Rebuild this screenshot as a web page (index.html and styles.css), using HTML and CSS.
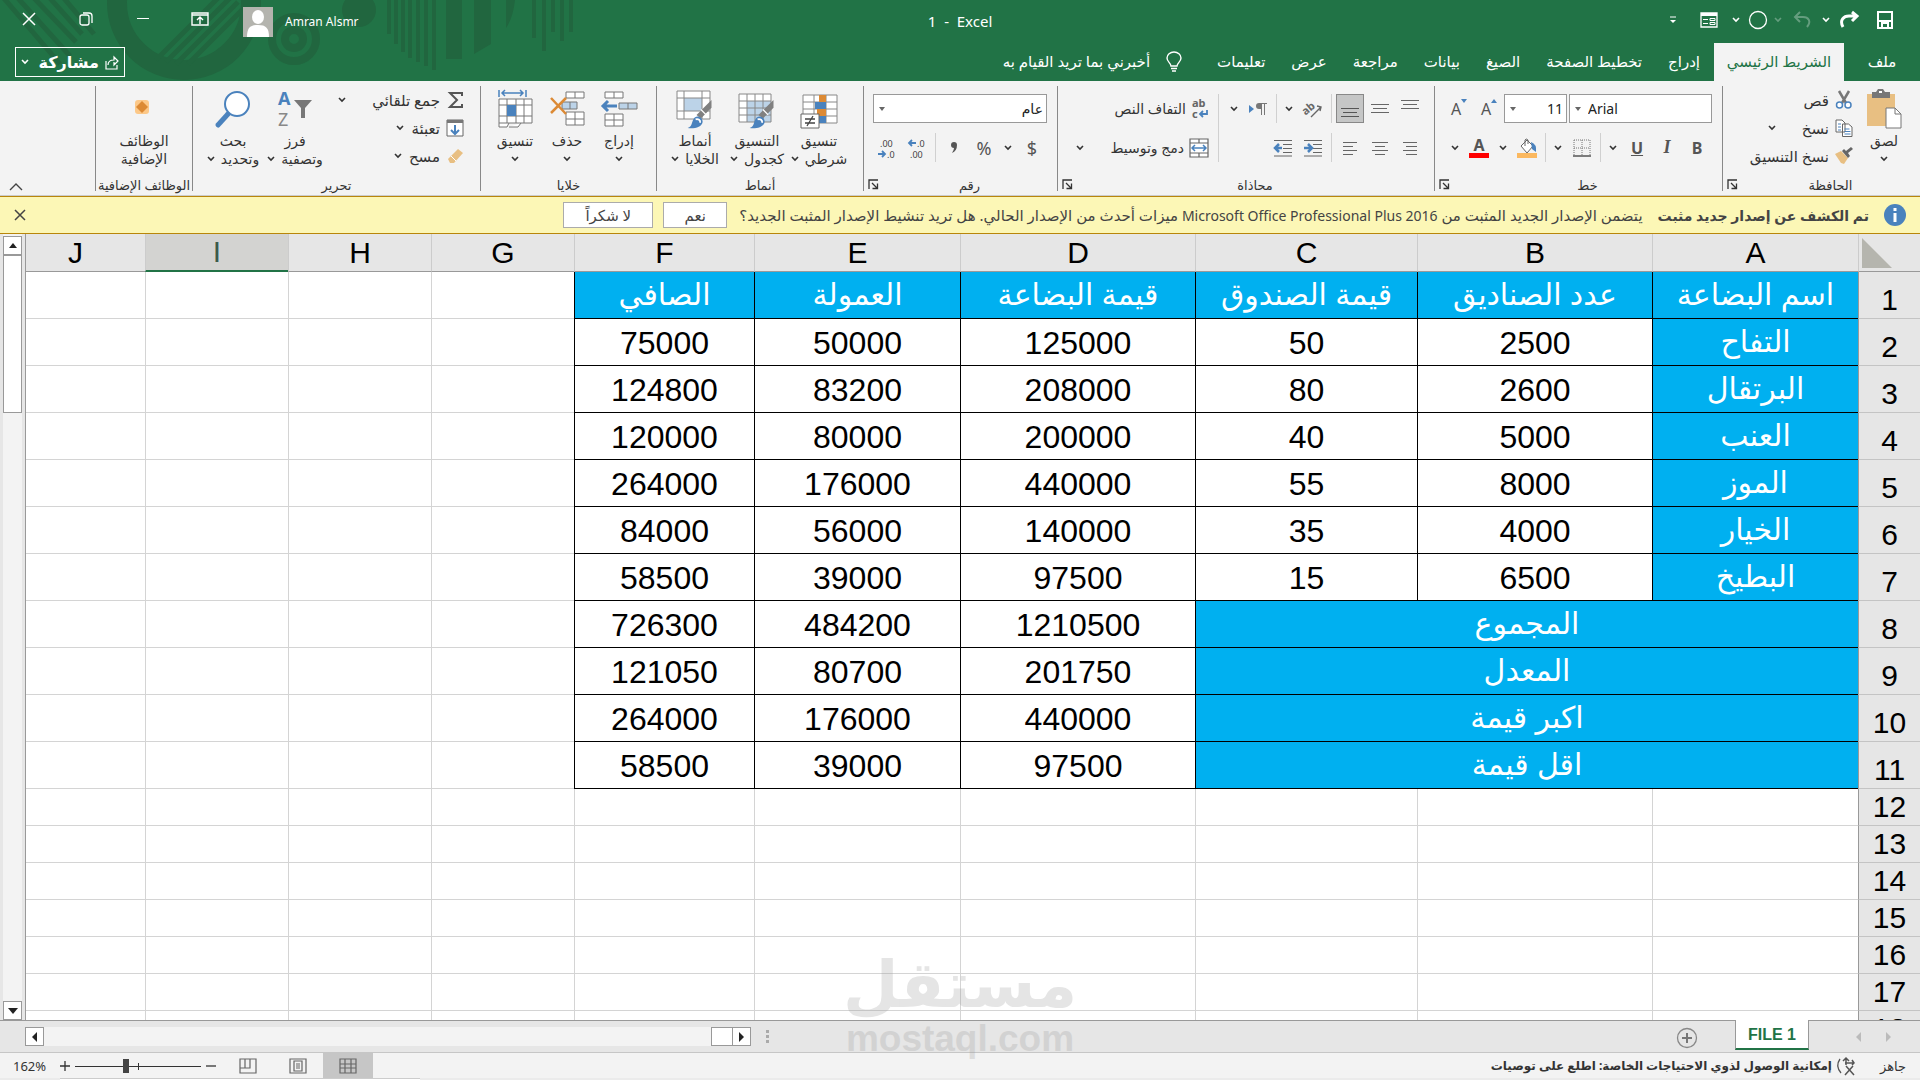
FILE: index.html
```html
<!DOCTYPE html>
<html lang="ar" dir="rtl">
<head>
  <meta charset="UTF-8">
  <title>1 - Excel</title>
  <link rel="stylesheet" href="styles.css">
</head>
<body>
  <!-- shared symbols -->
  <svg class="symbols" aria-hidden="true">
    <symbol id="chev" viewBox="0 0 8 6"><path d="M1 1l3 3 3-3" fill="none" stroke="currentColor" stroke-width="1.6"/></symbol>
    <symbol id="launch" viewBox="0 0 11 11"><path d="M1 10V1h9M4 4l5 5M9.500 4.500v5h-5" fill="none" stroke="#333" stroke-width="1.300"/></symbol>
    <symbol id="brush" viewBox="0 0 28 34"><path d="M27 1v9L15 22l-5-4z" fill="#808080"/><path d="M15 12l6 6" stroke="#fff" stroke-width="1.500"/><path d="M0 33c6-2 4-8 8-12 4-3 9 0 9 5-1 6-9 8-17 7z" fill="#4a82bd"/><path d="M9 23c3-1 6 1 5 4" fill="none" stroke="#fff" stroke-width="2"/></symbol>
  </svg>

  <header class="top">
    <svg class="pattern" width="600" height="81" viewBox="0 0 600 81" aria-hidden="true">
      <g fill="none" stroke="#21663f">
        <circle cx="184" cy="3" r="67" stroke-width="20"/>
        <circle cx="294" cy="39" r="22" stroke-width="8"/>
        <circle cx="294" cy="39" r="9" stroke-width="8"/>
        <path d="M2 -4l58 68M16 -4l54 60M32 -4l44 46M48 -4l34 38M62 -4l32 38" stroke-width="5"/>
        <path d="M156 60l62-62M166 62l64-64M176 64l62-62M188 64l54-54" stroke-width="5"/>
        <path d="M389 0v34M396 0v44M403 0v52M410 0v58M418 0v62M426 0v66M434 0v70" stroke-width="4"/>
        <path d="M454 0v59" stroke-width="16"/>
        <path d="M534 0v38M544 0v51M553 0v32M562 0v41M571 0v32" stroke-width="4"/>
      </g>
      <circle cx="359" cy="10" r="17" fill="#21663f"/>
      <path d="M474 0h17v44l-17 10zM506 0h9q-2 18-9 28z" fill="#21663f"/>
    </svg>

    <div class="titlebar">
      <div class="quick">
        <button class="q36" title="حفظ"><svg width="18" height="18"><path d="M2 1h14v16H2zM2 10h14M6 17v-5h6v5" fill="none" stroke="#fff" stroke-width="2"/></svg></button>
        <button class="q34" title="إعادة"><svg width="20" height="18"><path d="M3 16C-1 9 4 5 9 5h7M12 1l5 4-5 5" fill="none" stroke="#fff" stroke-width="3"/></svg></button>
        <button class="q14"><svg width="8" height="6"><use href="#chev"/></svg></button>
        <button class="q34 dim" title="تراجع"><svg width="20" height="18"><path d="M15 16C20 10 16 6 11 6H4M8 1L3 6l5 5" fill="none" stroke="#fff" stroke-width="2"/></svg></button>
        <button class="q14 dim"><svg width="8" height="6"><use href="#chev"/></svg></button>
        <button class="q26" title="شكل"><svg width="20" height="20"><circle cx="10" cy="10" r="8.500" fill="none" stroke="#fff" stroke-width="1.300"/></svg></button>
        <button class="q18"><svg width="8" height="6"><use href="#chev"/></svg></button>
        <button class="q36" title="نموذج"><svg width="18" height="16"><path d="M1 1h16v14H1z" fill="none" stroke="#fff" stroke-width="1.300"/><path d="M1 1h16v3H1z" fill="#fff"/><path d="M3 7.500h5M3 11.500h5M10 6.500h5v2h-5zM10 10.500h5v2h-5z" fill="none" stroke="#fff"/></svg></button>
        <button class="q36" title="تخصيص"><svg width="8" height="8"><path d="M1 1h6" stroke="#fff"/><path d="M1 4h6l-3 3z" fill="#fff"/></svg></button>
      </div>
      <h1 dir="ltr">1&nbsp; -&nbsp; Excel</h1>
      <div class="account">
        <span dir="ltr">Amran Alsmr</span>
        <svg width="30" height="30"><path d="M0 0h30v30H0z" fill="#b4b4ae"/><ellipse cx="15" cy="10" rx="6" ry="7" fill="#fff"/><path d="M4 30c0-9 3-12 11-12s11 3 11 12z" fill="#fff"/></svg>
      </div>
      <div class="window-buttons">
        <button title="خيارات الشريط"><svg width="18" height="14"><path d="M1 1h16v12H1zM1 3h16M9 12V6M6 8l3-3 3 3" fill="none" stroke="#fff" stroke-width="1.400"/></svg></button>
        <button title="تصغير"><svg width="14" height="14"><path d="M1 6.500h12" stroke="#fff"/></svg></button>
        <button title="استعادة"><svg width="14" height="14"><rect x="1" y="3" width="9" height="10" rx="2" fill="none" stroke="#fff" stroke-width="1.300"/><path d="M4 1h6q3 0 3 3v7" fill="none" stroke="#fff" stroke-width="1.300"/></svg></button>
        <button title="إغلاق"><svg width="14" height="14"><path d="M1 1l12 12M13 1L1 13" stroke="#fff" stroke-width="1.500"/></svg></button>
      </div>
    </div>

    <nav class="tabs">
      <a href="#" class="file">ملف</a>
      <a href="#" class="active">الشريط الرئيسي</a>
      <a href="#">إدراج</a>
      <a href="#">تخطيط الصفحة</a>
      <a href="#">الصيغ</a>
      <a href="#">بيانات</a>
      <a href="#">مراجعة</a>
      <a href="#">عرض</a>
      <a href="#">تعليمات</a>
      <a href="#" class="tell"><svg width="16" height="20"><path d="M5 14c0-3-4-4-4-8a7 6 0 0 1 14 0c0 4-4 5-4 8zM5 16.500h6M6 19h4" fill="none" stroke="#fff" stroke-width="1.400"/></svg>أخبرني بما تريد القيام به</a>
      <button class="share"><svg width="14" height="15"><path d="M1 6v8h11v-4M3 10c0-4 3-5 6-5V2l4 4-4 4V7" fill="none" stroke="#fff" stroke-width="1.200"/></svg><span>مشاركة</span><svg class="end" width="8" height="6"><use href="#chev"/></svg></button>
    </nav>
  </header>

  <section class="ribbon">
    <div class="group clipboard">
      <div class="body">
        <button class="big">
          <svg width="36" height="40"><path d="M1 5h28v32H1z" fill="#e8bf82"/><path d="M6 3h4l2-3h5l2 3h5v6H6z" fill="#777"/><path d="M13 3h3" stroke="#fff" stroke-width="2"/><path d="M20 19h9l6 6v14H20z" fill="#fff" stroke="#777"/><path d="M29 19v6h6" fill="none" stroke="#777"/></svg>
          <span>لصق</span>
          <span><svg width="8" height="6"><use href="#chev"/></svg></span>
        </button>
        <div class="small-list">
          <button><svg width="18" height="18"><path d="M4 0l7 12M14 0L7 12" stroke="#777" stroke-width="2.500"/><circle cx="4.500" cy="14" r="3" fill="#fff" stroke="#4a82bd" stroke-width="1.500"/><circle cx="13" cy="14" r="3" fill="#fff" stroke="#4a82bd" stroke-width="1.500"/></svg>قص</button>
          <button><svg width="18" height="18"><path d="M1 1h6l3 3v9H1zM7.500 5h6l3.500 3v9.500H7.500z" fill="#fff" stroke="#666"/><path d="M3 5h3M3 8h3M3 11h3M9.500 10h5M9.500 12.500h6M9.500 15h6" stroke="#4a82bd"/></svg>نسخ<svg class="chev-far" width="8" height="6"><use href="#chev"/></svg></button>
          <button><svg width="18" height="18"><path d="M0 7l6-3 7 7-4 6-3-1z" fill="#e8bf82"/><path d="M7 4l6 7 2-2-2-3 5-4-2-2-5 4-2-2z" fill="#666"/></svg>نسخ التنسيق</button>
        </div>
      </div>
      <div class="label"><span>الحافظة</span><button class="launcher"><svg width="11" height="11"><use href="#launch"/></svg></button></div>
    </div>

    <div class="group font">
      <div class="body rows">
        <div class="row">
          <label class="combo name" dir="ltr"><select aria-label="الخط"><option>Arial</option></select></label>
          <label class="combo size"><select aria-label="حجم الخط"><option>11</option></select></label>
          <button class="grow">A<svg width="6" height="4"><path d="M0 4h6L3 0z" fill="#4a82bd"/></svg></button>
          <button class="grow">A<svg width="6" height="4"><path d="M0 0h6L3 4z" fill="#4a82bd"/></svg></button>
        </div>
        <div class="row">
          <button><b>B</b></button>
          <button class="italic">I</button>
          <button><b class="under">U</b></button>
          <button class="drop"><svg width="8" height="6"><use href="#chev"/></svg></button>
          <i class="sep"></i>
          <button><svg width="18" height="18"><path d="M1 1h16M1 1v15M17 1v15M9 1v15M1 9h16" fill="none" stroke="#777" stroke-dasharray="1 1"/><path d="M0 17h18" stroke="#555" stroke-width="1.500"/></svg></button>
          <button class="drop"><svg width="8" height="6"><use href="#chev"/></svg></button>
          <i class="sep"></i>
          <button><svg width="20" height="20"><path d="M4 8l6-6 6 6-6 7z" fill="#fff" stroke="#666"/><path d="M8 8V2q1-2 3 0v4" fill="none" stroke="#666"/><path d="M14 4q6 2 5 10l-4-3z" fill="#4a82bd"/><path d="M0 15h20v5H0z" fill="#fbb85f"/></svg></button>
          <button class="drop"><svg width="8" height="6"><use href="#chev"/></svg></button>
          <button class="color"><b>A</b></button>
          <button class="drop"><svg width="8" height="6"><use href="#chev"/></svg></button>
        </div>
      </div>
      <div class="label"><span>خط</span><button class="launcher"><svg width="11" height="11"><use href="#launch"/></svg></button></div>
    </div>

    <div class="group align">
      <div class="body">
        <div class="rows">
          <div class="row">
            <button><svg width="18" height="20"><path d="M0 1.500h18M2 5.500h14M0 9.500h18" stroke="#666"/></svg></button>
            <button><svg width="18" height="20"><path d="M0 5.500h18M2 9.500h14M0 13.500h18" stroke="#666"/></svg></button>
            <button class="pressed"><svg width="18" height="20"><path d="M0 9.500h18M2 13.500h14M0 17.500h18" stroke="#555"/></svg></button>
            <i class="sep"></i>
            <button><svg width="20" height="18"><text x="-1" y="12" transform="rotate(-40 6 9)" class="icon-text">ab</text><path d="M8 17L18 7M14 6l4 1-1 4" fill="none" stroke="#666" stroke-width="1.400"/></svg></button>
            <button class="drop"><svg width="8" height="6"><use href="#chev"/></svg></button>
            <i class="sep"></i>
            <button><svg width="18" height="14"><path d="M0 3v8l5-4z" fill="#4a82bd"/><path d="M17 1H10a3 3 0 0 0 0 6h2V1z" fill="#777"/><path d="M12.500 1v12M15.500 1v12M10 1.500h8" stroke="#777"/></svg></button>
            <button class="drop"><svg width="8" height="6"><use href="#chev"/></svg></button>
          </div>
          <div class="row">
            <button><svg width="14" height="14"><path d="M0 1.500h14M3 5.500h11M0 9.500h14M3 13.500h11" stroke="#666"/></svg></button>
            <button><svg width="16" height="14"><path d="M0 1.500h16M3 5.500h10M0 9.500h16M3 13.500h10" stroke="#666"/></svg></button>
            <button><svg width="14" height="14"><path d="M0 1.500h14M0 5.500h10M0 9.500h14M0 13.500h10" stroke="#666"/></svg></button>
            <i class="sep"></i>
            <button><svg width="18" height="18"><path d="M0 1.500h18M9 5.500h9M9 9.500h9M9 13.500h9M0 17h18" stroke="#666"/><path d="M0 9h7M4 5l4 4-4 4" fill="none" stroke="#4a82bd" stroke-width="2.500"/></svg></button>
            <button><svg width="18" height="18"><path d="M0 1.500h18M9 5.500h9M9 9.500h9M9 13.500h9M0 17h18" stroke="#666"/><path d="M8 9H2M5 5L1 9l4 4" fill="none" stroke="#4a82bd" stroke-width="2.500"/></svg></button>
          </div>
        </div>
        <i class="sep tall"></i>
        <div class="rows">
          <div class="row">
            <button class="text"><svg width="18" height="20"><text x="1" y="8" class="icon-text">ab</text><text x="1" y="19" class="icon-text">c</text><path d="M16 11v4H9M12 12l-3 3 3 3" fill="none" stroke="#4a82bd" stroke-width="1.800"/></svg>التفاف النص</button>
          </div>
          <div class="row">
            <button class="text"><svg width="20" height="20"><path d="M1 1h18v18H1zM1 5h18M1 15h18M10 1v4M10 15v4" fill="#fff" stroke="#666" stroke-width="1.200"/><path d="M3 10h14M6 7l-3 3 3 3M14 7l3 3-3 3" fill="none" stroke="#4a82bd" stroke-width="1.500"/></svg>دمج وتوسيط</button>
            <button class="drop last"><svg width="8" height="6"><use href="#chev"/></svg></button>
          </div>
        </div>
      </div>
      <div class="label"><span>محاذاة</span><button class="launcher"><svg width="11" height="11"><use href="#launch"/></svg></button></div>
    </div>

    <div class="group number">
      <div class="body rows">
        <div class="row">
          <label class="combo format"><select aria-label="تنسيق الأرقام"><option>عام</option></select></label>
        </div>
        <div class="row">
          <button class="sign">$</button>
          <button class="drop"><svg width="8" height="6"><use href="#chev"/></svg></button>
          <button class="sign">%</button>
          <button><svg width="8" height="12"><path d="M1 3a3 3 0 0 1 6 0q0 6-5 8 2-3 2-5a3 3 0 0 1-3-3z" fill="#555"/></svg></button>
          <i class="sep"></i>
          <button><svg width="18" height="20"><path d="M8 5H1M4 2L1 5l3 3" fill="none" stroke="#4a82bd" stroke-width="1.800"/><text x="9" y="9" class="icon-num">.0</text><text x="2" y="20" class="icon-num">.00</text></svg></button>
          <button><svg width="18" height="20"><path d="M0 16h7M4 13l3 3-3 3" fill="none" stroke="#4a82bd" stroke-width="1.800"/><text x="2" y="9" class="icon-num">.00</text><text x="9" y="20" class="icon-num">.0</text></svg></button>
        </div>
      </div>
      <div class="label"><span>رقم</span><button class="launcher"><svg width="11" height="11"><use href="#launch"/></svg></button></div>
    </div>

    <div class="group styles">
      <div class="body">
        <button class="big">
          <svg width="38" height="40"><path d="M3 6h34v28H3zM3 13h34M3 20h34M3 27h34M14 6v28M26 6v28" fill="#fff" stroke="#888"/><path d="M19 6h7v7h-7zM17 20h9v7h-9z" fill="#dc8a35"/><path d="M15 13h11v7H15zM19 27h7v7h-7z" fill="#4a82bd"/><path d="M1 25h18v14H1z" fill="#fff" stroke="#666"/><path d="M5 30h10M5 34h10M13 27L7 37" stroke="#444" stroke-width="1.300"/></svg>
          <span>تنسيق</span>
          <span>شرطي<svg width="8" height="6"><use href="#chev"/></svg></span>
        </button>
        <button class="big">
          <svg width="38" height="40"><path d="M1 5h32v28H1z" fill="#fff"/><path d="M9 12h24v21H9z" fill="#bcd3e8"/><path d="M1 5h32v28H1zM1 12h32M1 19h32M1 26h32M9 5v28M17 5v28M25 5v28" fill="none" stroke="#888"/><svg x="10" y="10" width="28" height="30"><use href="#brush"/></svg></svg>
          <span>التنسيق</span>
          <span>كجدول<svg width="8" height="6"><use href="#chev"/></svg></span>
        </button>
        <button class="big">
          <svg width="38" height="40"><path d="M1 2h33v28H1z" fill="#fff"/><path d="M8 9h18v13H8z" fill="#bcd3e8"/><path d="M1 2h33v28H1zM1 9h33M1 22h33M8 2v28M26 2v28" fill="none" stroke="#888"/><svg x="10" y="10" width="28" height="30"><use href="#brush"/></svg></svg>
          <span>أنماط</span>
          <span>الخلايا<svg width="8" height="6"><use href="#chev"/></svg></span>
        </button>
      </div>
      <div class="label"><span>أنماط</span></div>
    </div>

    <div class="group cells">
      <div class="body">
        <button class="big">
          <svg width="38" height="40"><path d="M5 3h18v6H5zM14 3v6M5 25h18v12H5zM14 25v12M5 31h18" fill="#fff" stroke="#777"/><path d="M19 14h18v6H19zM28 14v6" fill="#bcd3e8" stroke="#777"/><path d="M17 17H4M8 12l-5 5 5 5" fill="none" stroke="#4a82bd" stroke-width="3"/></svg>
          <span>إدراج</span>
          <span><svg width="8" height="6"><use href="#chev"/></svg></span>
        </button>
        <button class="big">
          <svg width="38" height="40"><path d="M18 3h18v6H18zM27 3v6M18 23h18v13H18zM27 23v13M18 30h18" fill="#fff" stroke="#777"/><path d="M14 13h15v7H14zM22 13v7" fill="#bcd3e8" stroke="#777"/><path d="M3 9l15 16M18 9L3 24" fill="none" stroke="#dc8a35" stroke-width="2.500"/></svg>
          <span>حذف</span>
          <span><svg width="8" height="6"><use href="#chev"/></svg></span>
        </button>
        <button class="big">
          <svg width="38" height="40"><path d="M3 10h33v24H3zM3 16h33M3 27h33M11 10v24M20 10v24M28 10v24M3 34v4h8l2-4M13 38h9l3-4" fill="#fff" stroke="#777"/><path d="M11 16h9v11h-9z" fill="#4a82bd"/><path d="M3 1v7M30 1v7M6 4h21M9 1L6 4l3 3M24 1l3 3-3 3" fill="none" stroke="#4a82bd" stroke-width="1.500"/></svg>
          <span>تنسيق</span>
          <span><svg width="8" height="6"><use href="#chev"/></svg></span>
        </button>
      </div>
      <div class="label"><span>خلايا</span></div>
    </div>

    <div class="group editing">
      <div class="body">
        <div class="small-list">
          <button><svg width="18" height="18"><path d="M16 5V2H4l7 7-7 7h12v-3" fill="none" stroke="#555" stroke-width="2"/></svg>جمع تلقائي<svg class="chev-far" width="8" height="6"><use href="#chev"/></svg></button>
          <button><svg width="18" height="18"><path d="M1 1h16v16H1z" fill="#fff" stroke="#666"/><path d="M1 1h16v3H1z" fill="#777"/><path d="M9 6v8M5 11l4 4 4-4" fill="none" stroke="#4a82bd" stroke-width="2"/></svg>تعبئة<svg class="chev-near" width="8" height="6"><use href="#chev"/></svg></button>
          <button><svg width="18" height="18"><path d="M2 12L12 2l5 4L8 16H4z" fill="#e8bf82"/><path d="M5 9l5 5" stroke="#fff"/></svg>مسح<svg class="chev-near" width="8" height="6"><use href="#chev"/></svg></button>
        </div>
        <button class="big sort">
          <svg width="36" height="40"><text x="1" y="16" class="az-a">A</text><text x="1" y="37" class="az-z">Z</text><path d="M17 11h18l-7 8v10h-4V19z" fill="#777"/></svg>
          <span>فرز</span>
          <span>وتصفية<svg width="8" height="6"><use href="#chev"/></svg></span>
        </button>
        <button class="big find">
          <svg width="36" height="40"><path d="M3 36l10-11" stroke="#4a82bd" stroke-width="5" stroke-linecap="round"/><circle cx="22" cy="15" r="12" fill="#fff" stroke="#4a82bd" stroke-width="2"/></svg>
          <span>بحث</span>
          <span>وتحديد<svg width="8" height="6"><use href="#chev"/></svg></span>
        </button>
      </div>
      <div class="label"><span>تحرير</span></div>
    </div>

    <div class="group addins">
      <div class="body">
        <button class="big">
          <svg width="36" height="40"><rect x="9" y="11" width="14" height="14" rx="3" fill="#fcc888"/><path d="M16 12l6 6-6 6-6-6z" fill="#dc8a35"/></svg>
          <span>الوظائف</span>
          <span>الإضافية</span>
        </button>
      </div>
      <div class="label"><span>الوظائف الإضافية</span></div>
    </div>
    <button class="collapse" title="طي الشريط"><svg width="14" height="8"><path d="M1 7l6-6 6 6" fill="none" stroke="#444" stroke-width="1.400"/></svg></button>
  </section>

  <section class="message">
    <svg width="22" height="22"><circle cx="11" cy="11" r="11" fill="#4a82bd"/><path d="M11 4v3M11 9v9" stroke="#fff" stroke-width="3"/></svg>
    <strong>تم الكشف عن إصدار جديد مثبت</strong>
    <p>يتضمن الإصدار الجديد المثبت من <span class="product">Microsoft Office Professional Plus 2016</span> ميزات أحدث من الإصدار الحالي. هل تريد تنشيط الإصدار المثبت الجديد؟</p>
    <button class="yes">نعم</button>
    <button class="no">لا شكراً</button>
    <button class="close" title="إغلاق"><svg width="12" height="12"><path d="M1 1l10 10M11 1L1 11" stroke="#444" stroke-width="1.500"/></svg></button>
  </section>

  <main class="workspace">
    <div class="sheet">
      <table>
        <colgroup>
          <col class="c-head"><col class="c-a"><col class="c-b"><col class="c-c"><col class="c-b"><col class="c-a"><col class="c-f"><col class="c-g"><col class="c-g"><col class="c-g"><col>
        </colgroup>
        <thead>
          <tr><th class="corner"><svg width="30" height="30"><path d="M0 0v30h30z" fill="#b5b5ae"/></svg></th><th>A</th><th>B</th><th>C</th><th>D</th><th>E</th><th>F</th><th>G</th><th>H</th><th class="current">I</th><th class="cut">J</th></tr>
        </thead>
        <tbody class="data">
          <tr><th>1</th><td class="blue">اسم البضاعة</td><td class="blue">عدد الصناديق</td><td class="blue">قيمة الصندوق</td><td class="blue">قيمة البضاعة</td><td class="blue">العمولة</td><td class="blue">الصافي</td><td></td><td></td><td></td><td></td></tr>
          <tr><th>2</th><td class="blue">التفاح</td><td>2500</td><td>50</td><td>125000</td><td>50000</td><td>75000</td><td></td><td></td><td></td><td></td></tr>
          <tr><th>3</th><td class="blue">البرتقال</td><td>2600</td><td>80</td><td>208000</td><td>83200</td><td>124800</td><td></td><td></td><td></td><td></td></tr>
          <tr><th>4</th><td class="blue">العنب</td><td>5000</td><td>40</td><td>200000</td><td>80000</td><td>120000</td><td></td><td></td><td></td><td></td></tr>
          <tr><th>5</th><td class="blue">الموز</td><td>8000</td><td>55</td><td>440000</td><td>176000</td><td>264000</td><td></td><td></td><td></td><td></td></tr>
          <tr><th>6</th><td class="blue">الخيار</td><td>4000</td><td>35</td><td>140000</td><td>56000</td><td>84000</td><td></td><td></td><td></td><td></td></tr>
          <tr><th>7</th><td class="blue">البطيخ</td><td>6500</td><td>15</td><td>97500</td><td>39000</td><td>58500</td><td></td><td></td><td></td><td></td></tr>
          <tr><th>8</th><td class="blue" colspan="3">المجموع</td><td>1210500</td><td>484200</td><td>726300</td><td></td><td></td><td></td><td></td></tr>
          <tr><th>9</th><td class="blue" colspan="3">المعدل</td><td>201750</td><td>80700</td><td>121050</td><td></td><td></td><td></td><td></td></tr>
          <tr><th>10</th><td class="blue" colspan="3">اكبر قيمة</td><td>440000</td><td>176000</td><td>264000</td><td></td><td></td><td></td><td></td></tr>
          <tr><th>11</th><td class="blue" colspan="3">اقل قيمة</td><td>97500</td><td>39000</td><td>58500</td><td></td><td></td><td></td><td></td></tr>
        </tbody>
        <tbody class="empty">
          <tr><th>12</th><td></td><td></td><td></td><td></td><td></td><td></td><td></td><td></td><td></td><td></td></tr>
          <tr><th>13</th><td></td><td></td><td></td><td></td><td></td><td></td><td></td><td></td><td></td><td></td></tr>
          <tr><th>14</th><td></td><td></td><td></td><td></td><td></td><td></td><td></td><td></td><td></td><td></td></tr>
          <tr><th>15</th><td></td><td></td><td></td><td></td><td></td><td></td><td></td><td></td><td></td><td></td></tr>
          <tr><th>16</th><td></td><td></td><td></td><td></td><td></td><td></td><td></td><td></td><td></td><td></td></tr>
          <tr><th>17</th><td></td><td></td><td></td><td></td><td></td><td></td><td></td><td></td><td></td><td></td></tr>
          <tr><th>18</th><td></td><td></td><td></td><td></td><td></td><td></td><td></td><td></td><td></td><td></td></tr>
        </tbody>
      </table>
    </div>
    <div class="vscroll">
      <button title="أعلى"><svg width="8" height="5"><path d="M0 5h8L4 0z" fill="#222"/></svg></button>
      <div class="vthumb"></div>
      <button class="down" title="أسفل"><svg width="10" height="6"><path d="M0 0h10L5 6z" fill="#222"/></svg></button>
    </div>
  </main>

  <div class="sheetbar">
    <div class="sheet-nav">
      <svg width="6" height="10"><path d="M0 0v10l5-5z" fill="#bbb"/></svg>
      <svg width="6" height="10"><path d="M6 0v10L1 5z" fill="#bbb"/></svg>
    </div>
    <a href="#" class="sheet-tab" dir="ltr">FILE 1</a>
    <button class="add" title="ورقة جديدة"><svg width="22" height="22"><circle cx="11" cy="11" r="9.500" fill="none" stroke="#888" stroke-width="1.300"/><path d="M6 11h10M11 6v10" stroke="#777" stroke-width="2"/></svg></button>
    <div class="hscroll">
      <svg class="dots" width="4" height="14"><path d="M0 0h3v3H0zM0 5h3v3H0zM0 10h3v3H0z" fill="#aaa"/></svg>
      <button title="يمين"><svg width="5" height="10"><path d="M0 0v10l5-5z" fill="#222"/></svg></button>
      <div class="hthumb"></div>
      <div class="htrack"></div>
      <button title="يسار"><svg width="5" height="10"><path d="M5 0v10L0 5z" fill="#222"/></svg></button>
    </div>
  </div>

  <footer class="status">
    <span class="ready">جاهز</span>
    <svg width="20" height="18"><path d="M4 2q-5 7 1 14" fill="none" stroke="#555" stroke-width="1.300"/><path d="M10 1v7M7 4l3-3 3 3M9 6h9M16 3l2 3-2 2M10 9l8 9M17 9l-8 9" fill="none" stroke="#555" stroke-width="1.500"/></svg>
    <strong>إمكانية الوصول لذوي الاحتياجات الخاصة: اطلع على توصيات</strong>
    <div class="views">
      <button class="on" title="عادي"><svg width="18" height="16"><path d="M1 1h16v14H1zM1 6h16M1 10h16M6 1v14M12 1v14" fill="none" stroke="#666" stroke-width="1.200"/></svg></button>
      <button title="تخطيط الصفحة"><svg width="18" height="16"><path d="M1 1h16v14H1zM5 3h8v10H5zM7 6h4M7 8h4M7 10h4" fill="none" stroke="#666" stroke-width="1.200"/></svg></button>
      <button title="فواصل الصفحات"><svg width="18" height="16"><path d="M1 1h16v14H1zM1 10h10V1M6 1v9" fill="none" stroke="#666" stroke-width="1.200"/></svg></button>
    </div>
    <button class="zoom-btn" title="تصغير"><svg width="10" height="10"><path d="M0 5h10" stroke="#333" stroke-width="1.300"/></svg></button>
    <input class="zoom" type="range" dir="ltr" min="0" max="100" value="40" aria-label="تكبير/تصغير">
    <button class="zoom-btn" title="تكبير"><svg width="10" height="10"><path d="M0 5h10M5 0v10" stroke="#333" stroke-width="1.300"/></svg></button>
    <span class="percent" dir="ltr">162%</span>
  </footer>
  <div class="edge"><span></span></div>

  <div class="watermark" aria-hidden="true">
    <span class="wm-ar">مستقل</span>
    <span class="wm-en" dir="ltr">mostaql.com</span>
  </div>
</body>
</html>
```
FILE: styles.css
```css
* {
  box-sizing: border-box;
}
body {
  margin: 0;
  height: 100vh;
  display: flex;
  flex-direction: column;
  overflow: hidden;
  font-family: "Noto Sans", "DejaVu Sans", sans-serif;
  font-size: 13px;
  color: #333;
  background-color: #e6e6e6;
}
button {
  display: flex;
  align-items: center;
  justify-content: center;
  padding: 0;
  border: none;
  background: none;
  font: inherit;
  color: inherit;
}
a {
  color: inherit;
  text-decoration: none;
}
svg {
  flex: none;
  overflow: visible;
}
.symbols {
  position: absolute;
  width: 0;
  height: 0;
}

/* title bar and tabs */
.top {
  position: relative;
  background-color: #217346;
  color: #fff;
}
.pattern {
  position: absolute;
  left: 0;
  top: 0;
  overflow: hidden;
}
.titlebar {
  position: relative;
  display: grid;
  grid-template-columns: 1fr auto 1fr;
  height: 43px;
}
.quick {
  display: flex;
  align-items: center;
  height: 40px;
  padding-right: 17px;
}
.quick button {
  height: 30px;
}
.q14 { width: 14px; }
.q18 { width: 18px; }
.q26 { width: 26px; }
.q34 { width: 34px; }
.q36 { width: 36px; }
.dim {
  opacity: 0.3;
}
h1 {
  margin: 0;
  font-size: 15px;
  font-weight: normal;
  line-height: 43px;
}
.account {
  grid-column: 3;
  display: flex;
  align-items: center;
  justify-content: flex-end;
  gap: 12px;
  padding-left: 243px;
  font-size: 12px;
}
.window-buttons {
  position: absolute;
  left: 0;
  top: 0;
  display: flex;
}
.window-buttons button {
  width: 57px;
  height: 38px;
}
.tabs {
  position: relative;
  display: flex;
  height: 38px;
  font-size: 15px;
  white-space: nowrap;
}
.tabs a {
  padding: 0 13px;
  line-height: 36px;
}
.tabs .file {
  width: 76px;
  text-align: center;
}
.tabs .active {
  width: 130px;
  margin-left: 1px;
  padding: 0;
  text-align: center;
  background-color: #f3f3f3;
  color: #217346;
}
.tabs .tell {
  display: flex;
  gap: 16px;
  padding-right: 22px;
}
.tell svg {
  margin-top: 9px;
}
.share {
  width: 110px;
  height: 30px;
  margin: 4px auto 0 15px;
  padding: 0 5px;
  gap: 6px;
  border: 1px solid #fff;
  font-weight: bold;
  font-size: 16px;
}
.share .end {
  margin-right: auto;
}

/* ribbon */
.ribbon {
  display: flex;
  height: 115px;
  padding-top: 5px;
  background-color: #f3f3f3;
  border-bottom: 1px solid #ccc;
}
.group {
  display: flex;
  flex-direction: column;
  height: 105px;
  border-left: 1px solid #888;
}
.body {
  display: flex;
  height: 92px;
}
.label {
  display: flex;
  height: 12px;
  line-height: 14px;
  font-size: 13px;
  text-align: center;
  white-space: nowrap;
}
.label span {
  flex: 1;
}
.launcher {
  width: 18px;
}
.clipboard { width: 198px; }
.font { width: 288px; }
.align { width: 377px; }
.number { width: 194px; }
.styles { width: 207px; }
.cells { width: 176px; }
.editing { width: 288px; }
.addins { width: 97px; }
.clipboard .body { padding-right: 13px; }
.font .body, .number .body { padding-right: 10px; }
.align .body { padding-right: 9px; }
.styles .body { padding-right: 13px; }
.cells .body { padding-right: 11px; }
.editing .body { padding-right: 16px; }
.addins .body { justify-content: center; }

.big {
  flex-direction: column;
  justify-content: flex-start;
  width: 62px;
  padding-top: 3px;
  line-height: 18px;
  font-size: 14px;
}
.big > svg {
  margin-bottom: 3px;
}
.big span {
  display: flex;
  align-items: center;
  gap: 6px;
  height: 18px;
  white-space: nowrap;
}
.clipboard .big { width: 46px; }
.cells .big { width: 52px; }
.small-list button {
  height: 28px;
  gap: 6px;
  font-size: 15px;
}
.clipboard .small-list {
  margin-right: 8px;
}
.chev-near {
  margin-right: 1px;
}
.chev-far {
  margin-right: 20px;
}
.editing .small-list {
  width: 130px;
}
.sort {
  margin-right: 8px;
}

.rows {
  display: flex;
  flex-direction: column;
  gap: 10px;
  padding-top: 8px;
}
.row {
  display: flex;
  height: 29px;
}
.row button {
  width: 30px;
  color: #555;
  font-size: 16px;
}
.row .drop {
  width: 18px;
  color: #333;
}
.row .text {
  width: auto;
  gap: 5px;
  color: #333;
  font-size: 14px;
}
.row .last {
  margin-right: 21px;
}
.row .italic {
  font-family: "Liberation Serif", serif;
  font-style: italic;
  font-weight: bold;
  font-size: 18px;
}
.under {
  text-decoration: underline;
}
.row .grow {
  align-items: flex-start;
  padding-top: 5px;
  direction: ltr;
  line-height: 20px;
}
.row .color b {
  width: 20px;
  line-height: 16px;
  border-bottom: 5px solid #f00;
}
.row .sign {
  font-size: 18px;
}
.row .pressed {
  width: 28px;
  margin: 0 1px;
  background-color: #c5c6c6;
  border: 1px solid #888;
}
.sep {
  width: 1px;
  margin: 0 3px;
  background-color: #d0d0d0;
}
.tall {
  height: 68px;
  margin: 8px 6px 0 9px;
}
.combo {
  position: relative;
}
.combo select {
  width: 100%;
  height: 29px;
  padding: 0 3px;
  border: 1px solid #999;
  border-radius: 0;
  appearance: none;
  background-color: #fff;
  font: inherit;
  font-size: 14px;
  color: #222;
}
.combo::after {
  content: "";
  position: absolute;
  left: 6px;
  top: 13px;
  border: 3px solid transparent;
  border-top: 4px solid #666;
}
.name { width: 143px; }
.size { width: 63px; margin-right: 2px; }
.format { width: 174px; }
.name select {
  padding-left: 18px;
}
.icon-text {
  font: bold 11px "Noto Sans", sans-serif;
  fill: #666;
  direction: ltr;
}
.icon-num {
  font: 9px "Noto Sans", sans-serif;
  fill: #444;
  direction: ltr;
}
.az-a, .az-z {
  font: bold 18px "Noto Sans", sans-serif;
  fill: #4a82bd;
  direction: ltr;
}
.az-z {
  font-weight: normal;
  fill: #888;
}
.collapse {
  align-self: flex-end;
  width: 32px;
  height: 16px;
  margin-right: auto;
}

/* message bar */
.message {
  display: flex;
  align-items: center;
  height: 38px;
  padding-right: 14px;
  background-color: #fcf7b6;
  border: solid #b8860b;
  border-width: 1px 0;
  font-size: 15px;
  color: #444;
  white-space: nowrap;
}
.message strong {
  margin: 0 15px;
  font-size: 14px;
}
.message p {
  margin: 0;
}
.product {
  font-size: 14px;
}
.message .yes, .message .no {
  width: 64px;
  height: 26px;
  margin-right: 12px;
  background-color: #fff;
  border: 1px solid #ababab;
}
.message .no {
  width: 90px;
  margin-right: 10px;
}
.message .close {
  width: 40px;
  margin-right: auto;
}

/* sheet */
.workspace {
  flex: 1;
  display: flex;
  min-height: 0;
  border-bottom: 1px solid #999;
}
.sheet {
  flex: 1;
  overflow: hidden;
  background-color: #fff;
  border-left: 1px solid #999;
}
table {
  width: 100%;
  table-layout: fixed;
  border-collapse: separate;
  border-spacing: 0;
  font-family: "Liberation Sans", "DejaVu Sans", sans-serif;
}
.c-head { width: 62px; }
.c-a { width: 206px; }
.c-b { width: 235px; }
.c-c { width: 222px; }
.c-f { width: 180px; }
.c-g { width: 143px; }
th, td {
  padding: 0;
  text-align: center;
  overflow: hidden;
  white-space: nowrap;
}
th {
  font-weight: normal;
  font-size: 30px;
  line-height: 36px;
  color: #000;
  background-color: #e6e6e6;
  border-left: 1px solid #ccc;
  border-bottom: 1px solid #c4c4c4;
}
thead th {
  height: 38px;
  border-bottom-color: #999;
}
tbody th {
  border-left-color: #999;
}
th.corner {
  text-align: left;
  padding-left: 3px;
  line-height: 0;
}
th.current {
  background-color: #d3d3d1;
  color: #3c5a4a;
  border-bottom: 2px solid #217346;
}
th.cut {
  padding-right: 62px;
  border-left: none;
  text-align: right;
}
td {
  font-size: 32px;
  line-height: 36px;
  color: #000;
  border-left: 1px solid #d4d4d4;
  border-bottom: 1px solid #d4d4d4;
}
.data tr {
  height: 47px;
}
.data th {
  vertical-align: bottom;
}
.data td {
  padding-top: 2px;
}
.data td:not(:empty) {
  border-color: #000;
}
.data .blue {
  padding-top: 0;
  background-color: #00b0f0;
  color: #fff;
  font-size: 30px;
}
.empty tr {
  height: 37px;
}
td:last-child {
  border-left: none;
}
.vscroll {
  display: flex;
  flex-direction: column;
  width: 25px;
  padding: 2px 3px 0;
  background: linear-gradient(#f3f3f3, #f3f3f3) 3px 0 / 19px 100% no-repeat;
}
.vscroll button, .hscroll button {
  width: 19px;
  height: 19px;
  background-color: #fff;
  border: 1px solid #999;
}
.vthumb {
  height: 158px;
  background-color: #fff;
  border: 1px solid #999;
}
.vscroll .down {
  margin-top: auto;
}

/* sheet tabs and horizontal scroll */
.sheetbar {
  display: flex;
  height: 31px;
}
.sheet-nav {
  display: flex;
  align-items: center;
  justify-content: space-between;
  width: 111px;
  padding: 0 28px 0 46px;
}
.sheet-tab {
  width: 74px;
  height: 30px;
  margin-top: -1px;
  background-color: #fff;
  border: solid #999;
  border-width: 0 1px;
  border-bottom: 2px solid #217346;
  color: #217346;
  font: bold 16px/30px "Liberation Sans", sans-serif;
  text-align: center;
}
.add {
  width: 22px;
  margin-right: 37px;
  padding-top: 3px;
}
.hscroll {
  display: flex;
  align-items: center;
  width: 745px;
  margin-right: auto;
  margin-left: 25px;
}
.dots {
  margin-left: 15px;
}
.hthumb {
  width: 21px;
  height: 19px;
  background-color: #fff;
  border: 1px solid #999;
  border-right: none;
}
.htrack {
  flex: 1;
  height: 19px;
  background-color: #f3f3f3;
}

/* status bar */
.status {
  display: flex;
  align-items: center;
  height: 26px;
  padding-right: 14px;
  background-color: #f3f3f3;
  border-top: 1px solid #c6c6c6;
  font-size: 13px;
}
.ready {
  margin-left: 24px;
}
.status strong {
  margin-right: 4px;
  font-size: 12px;
}
.views {
  display: flex;
  align-self: stretch;
  margin-right: auto;
  margin-left: 3px;
}
.views button {
  width: 50px;
}
.views .on {
  background-color: #c6c6c6;
}
.zoom-btn {
  width: 18px;
}
.zoom {
  width: 126px;
  height: 16px;
  margin: 0 1px;
  appearance: none;
  background: linear-gradient(#333, #333) 0 8px / 100% 1px no-repeat, linear-gradient(#333, #333) 50% 5px / 1px 7px no-repeat;
}
.zoom::-webkit-slider-thumb {
  appearance: none;
  width: 6px;
  height: 14px;
  background-color: #444;
}
.percent {
  margin: 0 10px 0 13px;
}
.edge {
  display: flex;
  justify-content: flex-end;
  height: 2px;
  padding-left: 60px;
  background-color: #ebebeb;
}
.edge span {
  width: 360px;
  background-color: #fff;
  border-top: 1px solid #ccc;
}

/* watermark lies over the sheet and the bars */
.watermark {
  position: absolute;
  left: 42%;
  bottom: 22px;
  width: 16%;
  text-align: center;
  color: #999;
  opacity: 0.25;
  pointer-events: none;
}
.watermark span {
  display: block;
  white-space: nowrap;
}
.wm-ar {
  font: bold 64px/70px "DejaVu Sans", sans-serif;
}
.wm-en {
  font: bold 37px/38px "Liberation Sans", sans-serif;
}
```
